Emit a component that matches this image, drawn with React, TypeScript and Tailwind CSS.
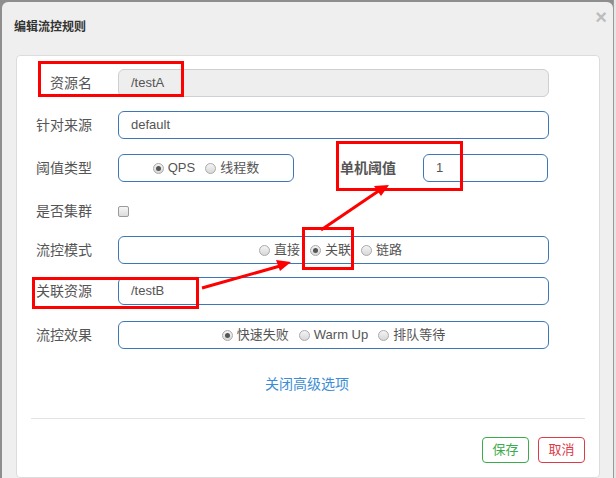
import React from "react";

const font = "font-['Liberation_Sans','Noto_Sans_CJK_SC',sans-serif]";

const Radio = ({ checked, label }: { checked?: boolean; label: string }) => (
  <span className="flex items-center">
    <span className="w-[11px] h-[11px] rounded-full border border-[#a9a9a9] bg-gradient-to-b from-[#f4f4f4] to-[#d8d8d8] flex items-center justify-center">
      {checked && <span className="w-[5px] h-[5px] rounded-full bg-[#555]" />}
    </span>
    <span className="ml-[4px] text-[13px] text-[#555]">{label}</span>
  </span>
);

const Label = ({ children }: { children: React.ReactNode }) => (
  <div className="w-[75px] text-right text-[14px] text-[#555] leading-[28px]">{children}</div>
);

const RedBox = ({ className }: { className: string }) => (
  <div className={`absolute border-[3px] border-[#f00] pointer-events-none ${className}`} />
);

export default function App() {
  return (
    <div className={`relative w-[616px] h-[478px] overflow-hidden bg-[#8e8e8e] flex ${font}`}>
      <div className="ml-[2px] mt-[2px] w-[611px] h-[476px] bg-[#efefef] rounded-t-[6px] flex flex-col">
        <div className="h-[53px] flex justify-between items-start">
          <div className="ml-[12px] mt-[17px] text-[12px] leading-[16px] font-bold text-[#333]">编辑流控规则</div>
          <div className="mr-[6px] mt-[3px] text-[20px] leading-[24px] font-bold text-[#bdbdbd]">×</div>
        </div>
        <div className="ml-[14px] w-[584px] flex-1 bg-white border border-[#dcdcdc] rounded-[4px] flex flex-col">
          <div className="mt-[13px] flex items-center h-[28px]">
            <Label>资源名</Label>
            <div className="ml-[26px] w-[431px] h-[28px] rounded-[6px] border border-[#cfcfcf] bg-[#eeeeee] pl-[12px] text-[13px] text-[#555] leading-[26px]">/testA</div>
          </div>
          <div className="mt-[14px] flex items-center h-[28px]">
            <Label>针对来源</Label>
            <div className="ml-[26px] w-[431px] h-[28px] rounded-[6px] border border-[#3d78b6] pl-[12px] text-[13px] text-[#555] leading-[26px]">default</div>
          </div>
          <div className="mt-[15px] flex items-center h-[28px]">
            <Label>阈值类型</Label>
            <div className="ml-[26px] w-[176px] h-[28px] rounded-[6px] border border-[#3d78b6] flex items-center justify-center gap-[10px]">
              <Radio checked label="QPS" />
              <Radio label="线程数" />
            </div>
            <div className="ml-[46px] text-[14px] font-bold text-[#555]">单机阈值</div>
            <div className="ml-[27px] w-[125px] h-[28px] rounded-[6px] border border-[#3d78b6] pl-[12px] text-[13px] text-[#555] leading-[26px]">1</div>
          </div>
          <div className="mt-[15px] flex items-center h-[28px]">
            <Label>是否集群</Label>
            <div className="ml-[26px] w-[11px] h-[11px] rounded-[2px] border border-[#9a9a9a] bg-gradient-to-b from-[#f6f6f6] to-[#dcdcdc]" />
          </div>
          <div className="mt-[11px] flex items-center h-[28px]">
            <Label>流控模式</Label>
            <div className="ml-[26px] w-[431px] h-[28px] rounded-[6px] border border-[#3d78b6] flex items-center justify-center gap-[10px] pr-[6px]">
              <Radio label="直接" />
              <Radio checked label="关联" />
              <Radio label="链路" />
            </div>
          </div>
          <div className="mt-[13px] flex items-center h-[28px]">
            <Label>关联资源</Label>
            <div className="ml-[26px] w-[431px] h-[28px] rounded-[6px] border border-[#3d78b6] pl-[12px] text-[13px] text-[#555] leading-[26px]">/testB</div>
          </div>
          <div className="mt-[16px] flex items-center h-[28px]">
            <Label>流控效果</Label>
            <div className="ml-[26px] w-[431px] h-[28px] rounded-[6px] border border-[#3d78b6] flex items-center justify-center gap-[10px]">
              <Radio checked label="快速失败" />
              <Radio label="Warm Up" />
              <Radio label="排队等待" />
            </div>
          </div>
          <div className="mt-[25px] h-[20px] leading-[20px] text-center text-[14px] text-[#3c8dd5]">
            <span className="ml-[-2px]">关闭高级选项</span>
          </div>
          <div className="mt-[24px] mx-[14px] border-t border-[#e3e3e3]" />
          <div className="mt-[18px] pr-[14px] flex justify-end gap-[9px]">
            <div className="w-[47px] h-[26px] rounded-[4px] border border-[#3cab4e] text-[#3cab4e] text-[13px] leading-[24px] text-center">保存</div>
            <div className="w-[47px] h-[26px] rounded-[4px] border border-[#dc3b48] text-[#dc3b48] text-[13px] leading-[24px] text-center">取消</div>
          </div>
        </div>
      </div>
      <div className="flex-1 bg-[#e6e6e6] border-l border-[#9a9a9a]" />

      <RedBox className="left-[38px] top-[61px] w-[146px] h-[36px]" />
      <RedBox className="left-[336px] top-[141px] w-[127px] h-[50px]" />
      <RedBox className="left-[302px] top-[227px] w-[52px] h-[43px]" />
      <RedBox className="left-[32px] top-[277px] w-[167px] h-[32px]" />

      <svg className="absolute left-0 top-0 pointer-events-none" width="616" height="478">
        <line x1="202" y1="288" x2="280" y2="266" stroke="#f00" strokeWidth="3" />
        <polygon points="291,262 276,260 280,271" fill="#f00" />
        <line x1="321" y1="230" x2="380" y2="190" stroke="#f00" strokeWidth="3" />
        <polygon points="389,185 374,186 381,196" fill="#f00" />
      </svg>
    </div>
  );
}
